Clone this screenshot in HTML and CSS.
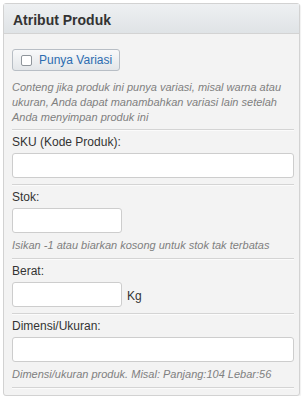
FILE: index.html
```html
<!DOCTYPE html>
<html lang="id">
<head>
    <meta charset="UTF-8">
    <title>Atribut Produk</title>
    <link rel="stylesheet" href="styles.css">
</head>
<body>
    <div class="panel">
        <div class="panel-head">
            <h3>Atribut Produk</h3>
        </div>
        <div class="panel-body">
            <div class="section first">
                <label class="variant-btn">
                    <span class="check"></span>
                    <span>Punya Variasi</span>
                </label>
                <p class="help">Conteng jika produk ini punya variasi, misal warna atau ukuran, Anda dapat manambahkan variasi lain setelah Anda menyimpan produk ini</p>
            </div>

            <div class="section">
                <label class="field-label">SKU (Kode Produk):</label>
                <input type="text" class="text-input wide">
            </div>

            <div class="section">
                <label class="field-label">Stok:</label>
                <input type="text" class="text-input short">
                <p class="help">Isikan -1 atau biarkan kosong untuk stok tak terbatas</p>
            </div>

            <div class="section">
                <label class="field-label">Berat:</label>
                <div class="unit-row">
                    <input type="text" class="text-input short">
                    <span class="unit">Kg</span>
                </div>
            </div>

            <div class="section">
                <label class="field-label">Dimensi/Ukuran:</label>
                <input type="text" class="text-input wide">
                <p class="help">Dimensi/ukuran produk. Misal: Panjang:104 Lebar:56</p>
            </div>
        </div>
    </div>
</body>
</html>
```

FILE: styles.css
```css
body {
    margin: 0;
    padding: 3px 0 0 3px;
    background-color: #ffffff;
    font-family: "Liberation Sans", Arial, sans-serif;
    font-size: 12px;
    color: #333333;
}

.panel {
    box-sizing: border-box;
    width: 297px;
    height: 393px;
    border: 1px solid #d2d2d2;
    border-radius: 3px;
    background-color: #f3f3f3;
    box-shadow: 1px 1px 1px rgba(0, 0, 0, 0.06);
}

.panel-head {
    height: 26px;
    padding: 3px 9px 0 9px;
    border-bottom: 1px solid #d3d3d3;
    background: linear-gradient(#eef0f2, #dfe3e6);
}

.panel-head h3 {
    margin: 0;
    line-height: 26px;
    font-size: 14px;
    font-weight: bold;
    color: #333333;
}

.panel-body {
    padding: 15px 5px 0 8px;
}

.section {
    padding: 4px 0 6px 0;
    border-bottom: 1px solid #d4d4d4;
    box-shadow: 0 1px 0 #fbfbfb;
}

.section.first {
    padding: 0 0 4px 0;
}

/* stok and dimensi end with a help line */
.section:nth-child(3),
.section:nth-child(5) {
    padding-bottom: 5px;
}

.variant-btn {
    box-sizing: border-box;
    display: flex;
    align-items: center;
    width: 108px;
    height: 22px;
    padding: 0 0 0 8px;
    border: 1px solid #b8bec5;
    border-radius: 3px;
    background: linear-gradient(#f8f9fa, #e3e6e9);
    color: #2c6cb0;
    font-size: 12px;
    cursor: pointer;
}

.check {
    box-sizing: border-box;
    width: 11px;
    height: 11px;
    margin-right: 7px;
    border: 1px solid #8f959b;
    border-radius: 2px;
    background-color: #ffffff;
}

.help {
    margin: 9px 0 0 0;
    font-size: 11px;
    font-style: italic;
    line-height: 15px;
    color: #808080;
}

.section .text-input + .help {
    margin-top: 5px;
}

.field-label {
    display: block;
    line-height: 16px;
    margin-bottom: 3px;
}

.text-input {
    box-sizing: border-box;
    display: block;
    height: 25px;
    margin: 0;
    border: 1px solid #cdcdcd;
    border-radius: 3px;
    background-color: #ffffff;
}

.text-input.wide {
    width: 100%;
}

.text-input.short {
    width: 110px;
}

.unit-row {
    display: flex;
    align-items: flex-end;
    gap: 5px;
}

.unit {
    margin-bottom: 3px;
    line-height: 16px;
}
```
